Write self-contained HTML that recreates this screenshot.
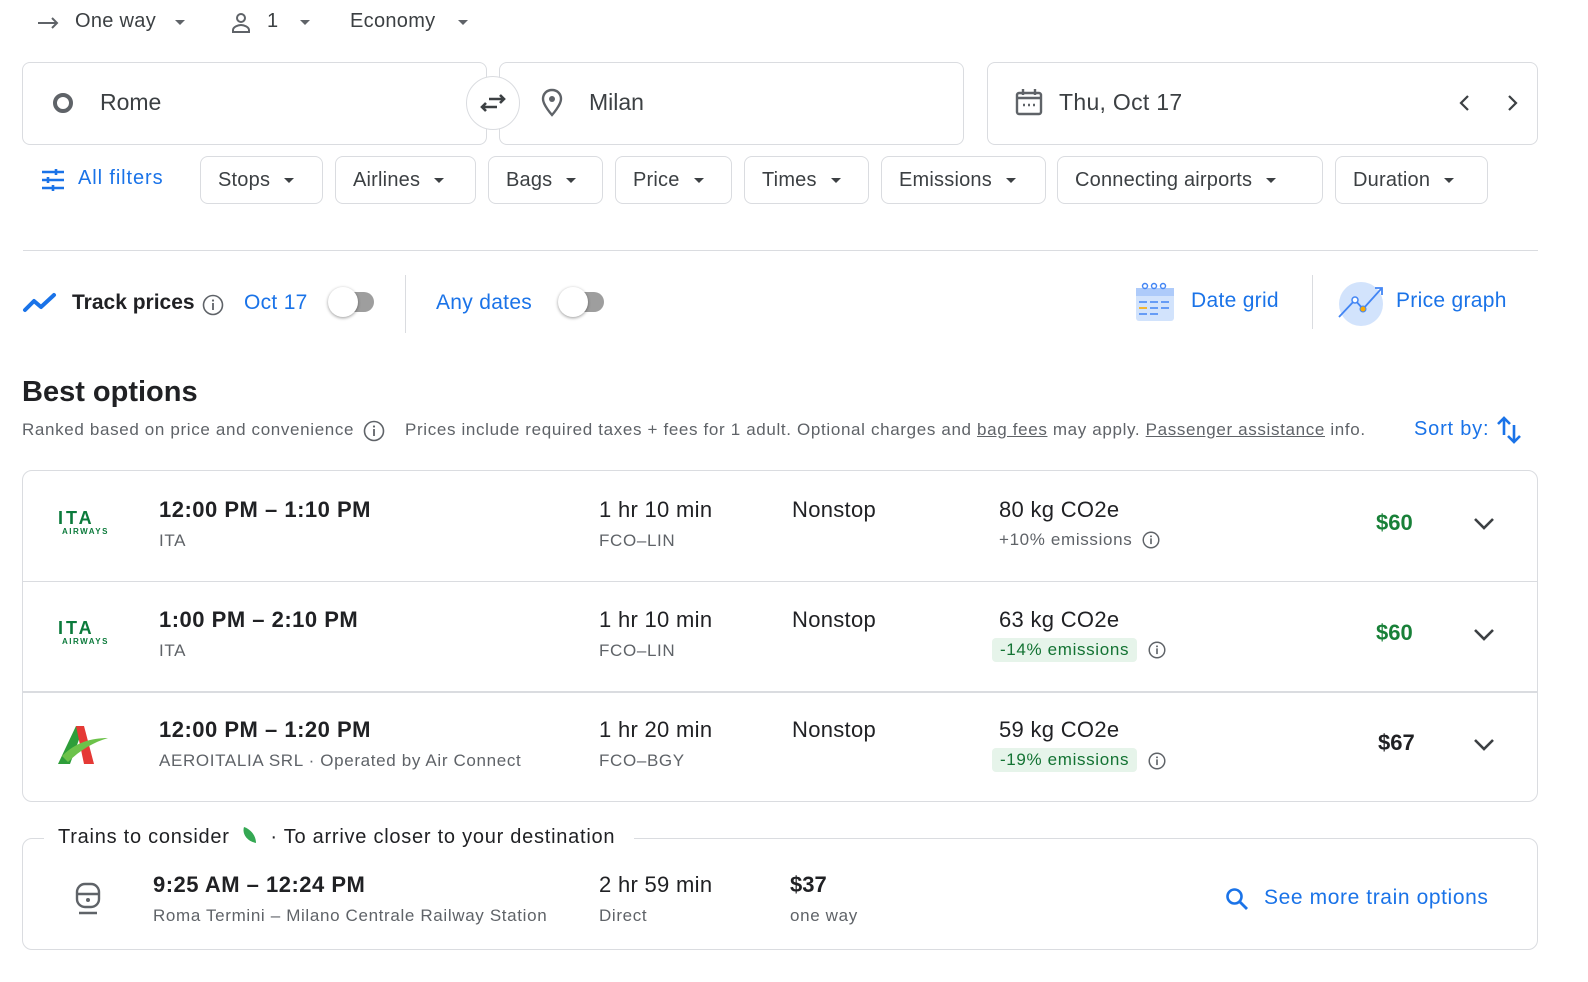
<!DOCTYPE html>
<html><head><meta charset="utf-8"><style>
*{margin:0;padding:0;box-sizing:border-box}
body{width:1588px;height:982px;background:#fff;font-family:"Liberation Sans",sans-serif;color:#202124;position:relative;overflow:hidden}
.a{position:absolute;white-space:nowrap}
.g{color:#5f6368}
.b{color:#1a73e8}
.box{position:absolute;border:1px solid #dadce0;border-radius:8px}
.chip{position:absolute;top:156px;height:48px;border:1px solid #dadce0;border-radius:8px;font-size:20px;line-height:46px;padding-left:17px;color:#3c4043;letter-spacing:0.2px}
.tri{display:inline-block;width:0;height:0;border-left:5px solid transparent;border-right:5px solid transparent;border-top:5px solid #3c4043;vertical-align:middle;margin-left:14px}
.t{font-size:22px;font-weight:bold;letter-spacing:0.5px}
.s{font-size:17px;color:#5f6368;letter-spacing:0.65px}
.m{font-size:22px;letter-spacing:0.3px}
.pill{background:#e6f4ea;color:#137333;font-size:17px;padding:2px 8px;border-radius:4px;letter-spacing:0.65px}
.tog{position:absolute;width:40px;height:20px;border-radius:10px;background:#9e9e9e}
.tog i{position:absolute;left:-6px;top:-5px;width:30px;height:30px;border-radius:50%;background:#fff;box-shadow:0 1px 3px rgba(0,0,0,.4)}
.line{position:absolute;left:23px;width:1515px;height:1px;background:#dadce0}
.ita{position:absolute;font-size:18px;font-weight:bold;color:#0b7a3b;letter-spacing:3px}
.itaw{position:absolute;font-size:8px;font-weight:bold;color:#0b7a3b;letter-spacing:1.5px}
</style></head><body>

<!-- top row -->
<svg class="a" style="left:36px;top:13px" width="26" height="20" viewBox="0 0 26 20"><path d="M2 10h19M16 5l5 5-5 5" stroke="#5f6368" stroke-width="2" fill="none"/></svg>
<div class="a" style="left:75px;top:10px;font-size:20px;color:#3c4043;letter-spacing:0.3px">One way</div>
<span class="a tri" style="left:175px;top:20px;margin:0;border-top-color:#5f6368"></span>
<svg class="a" style="left:229px;top:11px" width="24" height="24" viewBox="0 0 24 24"><circle cx="12" cy="7" r="4" stroke="#5f6368" stroke-width="2" fill="none"/><path d="M4 21v-2c0-3 5-5 8-5s8 2 8 5v2z" stroke="#5f6368" stroke-width="2" fill="none"/></svg>
<div class="a" style="left:267px;top:10px;font-size:20px;color:#3c4043">1</div>
<span class="a tri" style="left:300px;top:20px;margin:0;border-top-color:#5f6368"></span>
<div class="a" style="left:350px;top:10px;font-size:20px;color:#3c4043;letter-spacing:0.3px">Economy</div>
<span class="a tri" style="left:458px;top:20px;margin:0;border-top-color:#5f6368"></span>

<!-- search boxes -->
<div class="box" style="left:22px;top:62px;width:465px;height:83px"></div>
<div class="box" style="left:499px;top:62px;width:465px;height:83px"></div>
<div class="box" style="left:987px;top:62px;width:551px;height:83px"></div>
<div class="a" style="left:53px;top:93px;width:20px;height:20px;border:4px solid #5f6368;border-radius:50%"></div>
<div class="a" style="left:100px;top:89px;font-size:23px;color:#3c4043">Rome</div>
<div class="a" style="left:466px;top:76px;width:54px;height:54px;border:1px solid #dadce0;border-radius:50%;background:#fff"></div>
<svg class="a" style="left:478px;top:88px" width="30" height="30" viewBox="0 0 30 30"><path d="M4 19h15M8 15l-4 4 4 4M11 11h15M22 7l4 4-4 4" stroke="#3c4043" stroke-width="2.6" fill="none"/></svg>
<svg class="a" style="left:540px;top:88px" width="24" height="30" viewBox="0 0 24 30"><path d="M12 2C6.5 2 3 6 3 11c0 6 9 16 9 16s9-10 9-16c0-5-3.5-9-9-9z" stroke="#5f6368" stroke-width="2.4" fill="none"/><circle cx="12" cy="11" r="3" fill="#5f6368"/></svg>
<div class="a" style="left:589px;top:89px;font-size:23px;color:#3c4043">Milan</div>
<svg class="a" style="left:1014px;top:87px" width="30" height="30" viewBox="0 0 30 30"><rect x="3" y="6" width="24" height="21" rx="2" stroke="#5f6368" stroke-width="2.4" fill="none"/><path d="M3 11h24M9 2v6M21 2v6" stroke="#5f6368" stroke-width="2.4"/><path d="M9 18h2M14 18h2M19 18h2" stroke="#5f6368" stroke-width="2.4"/></svg>
<div class="a" style="left:1059px;top:89px;font-size:23px;color:#3c4043;letter-spacing:0.3px">Thu, Oct 17</div>
<svg class="a" style="left:1455px;top:93px" width="20" height="20" viewBox="0 0 20 20"><path d="M13 3l-7 7 7 7" stroke="#3c4043" stroke-width="2.2" fill="none"/></svg>
<svg class="a" style="left:1502px;top:93px" width="20" height="20" viewBox="0 0 20 20"><path d="M7 3l7 7-7 7" stroke="#3c4043" stroke-width="2.2" fill="none"/></svg>

<!-- filters -->
<svg class="a" style="left:41px;top:169px" width="24" height="22" viewBox="0 0 24 22"><path d="M1 3h22M1 11h22M1 19h22" stroke="#1a73e8" stroke-width="2.4"/><path d="M15 0v6M7 8v6M12 16v6" stroke="#1a73e8" stroke-width="2.6"/></svg>
<div class="a b" style="left:78px;top:167px;font-size:20px;letter-spacing:0.9px">All filters</div>
<div class="chip" style="left:200px;width:123px">Stops<span class="tri"></span></div>
<div class="chip" style="left:335px;width:141px">Airlines<span class="tri"></span></div>
<div class="chip" style="left:488px;width:115px">Bags<span class="tri"></span></div>
<div class="chip" style="left:615px;width:117px">Price<span class="tri"></span></div>
<div class="chip" style="left:744px;width:125px">Times<span class="tri"></span></div>
<div class="chip" style="left:881px;width:165px">Emissions<span class="tri"></span></div>
<div class="chip" style="left:1057px;width:266px">Connecting airports<span class="tri"></span></div>
<div class="chip" style="left:1335px;width:153px">Duration<span class="tri"></span></div>

<div class="line" style="top:250px"></div>

<!-- track row -->
<svg class="a" style="left:22px;top:292px" width="36" height="22" viewBox="0 0 36 22"><path d="M3 18l9-9 7 6 13-12" stroke="#1a73e8" stroke-width="4" fill="none" stroke-linecap="round" stroke-linejoin="round"/></svg>
<div class="a" style="left:72px;top:291px;font-size:21px;font-weight:bold;color:#202124">Track prices</div>
<svg class="a" style="left:202px;top:294px" width="22" height="22" viewBox="0 0 22 22"><circle cx="11" cy="11" r="9.5" stroke="#5f6368" stroke-width="1.6" fill="none"/><path d="M11 9v7" stroke="#5f6368" stroke-width="1.8"/><circle cx="11" cy="6.5" r="1.1" fill="#5f6368"/></svg>
<div class="a b" style="left:244px;top:291px;font-size:21px;letter-spacing:0.3px">Oct 17</div>
<div class="tog" style="left:334px;top:292px"><i></i></div>
<div class="a" style="left:405px;top:275px;width:1px;height:58px;background:#dadce0"></div>
<div class="a b" style="left:436px;top:291px;font-size:21px;letter-spacing:0.3px">Any dates</div>
<div class="tog" style="left:564px;top:292px"><i></i></div>

<svg class="a" style="left:1135px;top:282px" width="42" height="40" viewBox="0 0 42 40"><rect x="1" y="6" width="38" height="33" rx="3" fill="#d2e3fc"/><rect x="1" y="6" width="38" height="8" fill="#aecbfa"/><circle cx="10" cy="4" r="2.5" stroke="#4285f4" fill="none" stroke-width="1.4"/><circle cx="19" cy="4" r="2.5" stroke="#4285f4" fill="none" stroke-width="1.4"/><circle cx="28" cy="4" r="2.5" stroke="#4285f4" fill="none" stroke-width="1.4"/><path d="M4 20h8M15 20h8M26 20h8M15 26h8M26 26h8M4 32h8M15 32h8" stroke="#4285f4" stroke-width="1.6"/><path d="M4 26h8" stroke="#f9ab00" stroke-width="1.6"/></svg>
<div class="a b" style="left:1191px;top:289px;font-size:21px;letter-spacing:0.3px">Date grid</div>
<div class="a" style="left:1312px;top:275px;width:1px;height:54px;background:#dadce0"></div>
<svg class="a" style="left:1337px;top:279px" width="48" height="48" viewBox="0 0 48 48"><circle cx="24" cy="25" r="22" fill="#d2e3fc"/><path d="M2 38l16-17 8 9 18-20" stroke="#4285f4" stroke-width="1.8" fill="none"/><path d="M38 9h7v7" stroke="#4285f4" stroke-width="1.8" fill="none"/><circle cx="18" cy="21" r="3" fill="#fff" stroke="#4285f4" stroke-width="1.5"/><circle cx="26" cy="30" r="3" fill="#f9ab00" stroke="#4285f4" stroke-width="1"/></svg>
<div class="a b" style="left:1396px;top:289px;font-size:21px;letter-spacing:0.3px">Price graph</div>

<!-- best options -->
<div class="a" style="left:22px;top:376px;font-size:29px;font-weight:bold;color:#202124">Best options</div>
<div class="a s" style="left:22px;top:420px">Ranked based on price and convenience</div>
<svg class="a" style="left:363px;top:420px" width="22" height="22" viewBox="0 0 22 22"><circle cx="11" cy="11" r="9.5" stroke="#5f6368" stroke-width="1.6" fill="none"/><path d="M11 9v7" stroke="#5f6368" stroke-width="1.8"/><circle cx="11" cy="6.5" r="1.1" fill="#5f6368"/></svg>
<div class="a s" style="left:405px;top:420px">Prices include required taxes + fees for 1 adult. Optional charges and <u>bag fees</u> may apply. <u>Passenger assistance</u> info.</div>
<div class="a b" style="left:1414px;top:418px;font-size:20px;letter-spacing:0.8px">Sort by:</div>
<svg class="a" style="left:1496px;top:415px" width="26" height="30" viewBox="0 0 26 30"><path d="M8 20V3M2 9l6-6 6 6M18 10v17M12 21l6 6 6-6" stroke="#1a73e8" stroke-width="2.6" fill="none"/></svg>

<!-- flights card -->
<div class="box" style="left:22px;top:470px;width:1516px;height:332px;border-radius:10px"></div>
<div class="line" style="top:581px"></div>
<div class="line" style="top:691px;height:2px"></div>

<!-- row 1 -->
<div class="ita" style="left:58px;top:508px">ITA</div>
<div class="itaw" style="left:62px;top:527px">AIRWAYS</div>
<div class="a t" style="left:159px;top:497px">12:00 PM – 1:10 PM</div>
<div class="a s" style="left:159px;top:531px">ITA</div>
<div class="a m" style="left:599px;top:497px">1 hr 10 min</div>
<div class="a s" style="left:599px;top:531px">FCO–LIN</div>
<div class="a m" style="left:792px;top:497px">Nonstop</div>
<div class="a m" style="left:999px;top:497px">80 kg CO2e</div>
<div class="a s" style="left:999px;top:530px">+10% emissions</div>
<svg class="a" style="left:1142px;top:531px" width="18" height="18" viewBox="0 0 22 22"><circle cx="11" cy="11" r="9.5" stroke="#5f6368" stroke-width="1.8" fill="none"/><path d="M11 9v7" stroke="#5f6368" stroke-width="2"/><circle cx="11" cy="6.5" r="1.2" fill="#5f6368"/></svg>
<div class="a" style="left:1376px;top:510px;font-size:22px;font-weight:bold;color:#188038">$60</div>
<svg class="a" style="left:1472px;top:515px" width="24" height="18" viewBox="0 0 24 18"><path d="M3 4l9 9 9-9" stroke="#3c4043" stroke-width="2.6" fill="none"/></svg>

<!-- row 2 -->
<div class="ita" style="left:58px;top:618px">ITA</div>
<div class="itaw" style="left:62px;top:637px">AIRWAYS</div>
<div class="a t" style="left:159px;top:607px">1:00 PM – 2:10 PM</div>
<div class="a s" style="left:159px;top:641px">ITA</div>
<div class="a m" style="left:599px;top:607px">1 hr 10 min</div>
<div class="a s" style="left:599px;top:641px">FCO–LIN</div>
<div class="a m" style="left:792px;top:607px">Nonstop</div>
<div class="a m" style="left:999px;top:607px">63 kg CO2e</div>
<div class="a pill" style="left:992px;top:638px">-14% emissions</div>
<svg class="a" style="left:1148px;top:641px" width="18" height="18" viewBox="0 0 22 22"><circle cx="11" cy="11" r="9.5" stroke="#5f6368" stroke-width="1.8" fill="none"/><path d="M11 9v7" stroke="#5f6368" stroke-width="2"/><circle cx="11" cy="6.5" r="1.2" fill="#5f6368"/></svg>
<div class="a" style="left:1376px;top:620px;font-size:22px;font-weight:bold;color:#188038">$60</div>
<svg class="a" style="left:1472px;top:626px" width="24" height="18" viewBox="0 0 24 18"><path d="M3 4l9 9 9-9" stroke="#3c4043" stroke-width="2.6" fill="none"/></svg>

<!-- row 3 -->
<svg class="a" style="left:58px;top:724px" width="52" height="42" viewBox="0 0 52 42"><path d="M0 40L18 2h8L12 40z" fill="#2e9e3a"/><path d="M18 2h8l10 38h-10z" fill="#e53935"/><path d="M4 32C18 18 34 14 50 14C36 18 22 26 10 38z" fill="#6cc24a"/></svg>
<div class="a t" style="left:159px;top:717px">12:00 PM – 1:20 PM</div>
<div class="a s" style="left:159px;top:751px">AEROITALIA SRL · Operated by Air Connect</div>
<div class="a m" style="left:599px;top:717px">1 hr 20 min</div>
<div class="a s" style="left:599px;top:751px">FCO–BGY</div>
<div class="a m" style="left:792px;top:717px">Nonstop</div>
<div class="a m" style="left:999px;top:717px">59 kg CO2e</div>
<div class="a pill" style="left:992px;top:748px">-19% emissions</div>
<svg class="a" style="left:1148px;top:752px" width="18" height="18" viewBox="0 0 22 22"><circle cx="11" cy="11" r="9.5" stroke="#5f6368" stroke-width="1.8" fill="none"/><path d="M11 9v7" stroke="#5f6368" stroke-width="2"/><circle cx="11" cy="6.5" r="1.2" fill="#5f6368"/></svg>
<div class="a" style="left:1378px;top:730px;font-size:22px;font-weight:bold;color:#202124">$67</div>
<svg class="a" style="left:1472px;top:736px" width="24" height="18" viewBox="0 0 24 18"><path d="M3 4l9 9 9-9" stroke="#3c4043" stroke-width="2.6" fill="none"/></svg>

<!-- trains -->
<div class="box" style="left:22px;top:838px;width:1516px;height:112px;border-radius:10px"></div>
<div class="a" style="left:44px;top:826px;width:590px;height:24px;background:#fff"></div>
<div class="a" style="left:58px;top:825px;font-size:20px;color:#202124;letter-spacing:0.75px">Trains to consider <svg width="20" height="20" viewBox="0 0 20 20" style="vertical-align:-2px;margin:0 4px"><path d="M4 2C2 8 6 16 16 18C16 10 10 4 4 2z" fill="#34a853"/></svg> · To arrive closer to your destination</div>
<svg class="a" style="left:74px;top:882px" width="28" height="34" viewBox="0 0 28 34"><rect x="3" y="2" width="22" height="23" rx="8" stroke="#5f6368" stroke-width="2.4" fill="none"/><path d="M3 12h22" stroke="#5f6368" stroke-width="2.4"/><circle cx="14" cy="18" r="2" fill="#5f6368"/><path d="M5 31h18" stroke="#5f6368" stroke-width="2.4"/></svg>
<div class="a t" style="left:153px;top:872px">9:25 AM – 12:24 PM</div>
<div class="a s" style="left:153px;top:906px">Roma Termini – Milano Centrale Railway Station</div>
<div class="a m" style="left:599px;top:872px">2 hr 59 min</div>
<div class="a s" style="left:599px;top:906px">Direct</div>
<div class="a" style="left:790px;top:872px;font-size:22px;font-weight:bold">$37</div>
<div class="a s" style="left:790px;top:906px">one way</div>
<svg class="a" style="left:1225px;top:887px" width="24" height="24" viewBox="0 0 24 24"><circle cx="9.5" cy="9.5" r="7" stroke="#1a73e8" stroke-width="2.6" fill="none"/><path d="M15 15l7 7" stroke="#1a73e8" stroke-width="2.8"/></svg>
<div class="a b" style="left:1264px;top:886px;font-size:21px;letter-spacing:0.6px">See more train options</div>

</body></html>
